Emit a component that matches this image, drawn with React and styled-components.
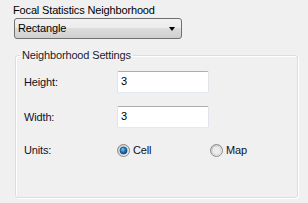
import React from 'react'
import styled, { createGlobalStyle } from 'styled-components'

const GlobalStyle = createGlobalStyle`
  html, body {
    margin: 0;
    padding: 0;
    background: #f0f0f0;
  }
  body {
    font-family: "Liberation Sans", Arial, sans-serif;
    font-size: 11px;
    letter-spacing: -0.15px;
    color: #000;
  }
`

const Page = styled.div`
  width: 308px;
  height: 203px;
  box-sizing: border-box;
  padding: 4px 0 0 14px;
  display: flex;
  flex-direction: column;
`

const Title = styled.div`
  margin-left: -1px;
  line-height: 13px;
`

const Combo = styled.div`
  margin-top: 1px;
  width: 168px;
  height: 21px;
  flex: none;
  box-sizing: border-box;
  border: 1px solid #707070;
  border-radius: 3px;
  background: linear-gradient(#f2f2f2 0%, #ebebeb 50%, #dddddd 50%, #cfcfcf 100%);
  display: flex;
  align-items: center;
  justify-content: space-between;
  padding: 0 4px 0 3px;
`

const ComboText = styled.span`
  line-height: 13px;
`

const Arrow = styled.span`
  width: 0;
  height: 0;
  border-left: 3.5px solid transparent;
  border-right: 3.5px solid transparent;
  border-top: 4px solid #000;
  margin-right: 2px;
`

const Group = styled.fieldset`
  margin: 10px 0 0 1px;
  width: 283px;
  height: 149px;
  flex: none;
  box-sizing: border-box;
  padding: 9px 8px 0 8px;
  border: 1px solid #d5dfe5;
  border-radius: 3px;
  box-shadow: inset 1px 1px 0 #fff, 1px 1px 0 #fff;
`

const Legend = styled.legend`
  margin-left: -4px;
  padding: 0 2px;
  line-height: 13px;
  color: #1a1a2e;
`

const Form = styled.div`
  display: grid;
  grid-template-columns: 93px auto;
  row-gap: 13px;
  align-items: center;
`

const Label = styled.span`
  line-height: 13px;
  color: #101025;
`

const TextBox = styled.input`
  width: 92px;
  height: 22px;
  box-sizing: border-box;
  margin: 0;
  border: 1px solid #e2e3ea;
  border-top-color: #abadb3;
  border-bottom-color: #e3e9ef;
  border-radius: 2px;
  background: #fff;
  padding: 0 3px 3px;
  font: inherit;
  color: #000;
  outline: none;
`

const UnitsRow = styled.div`
  grid-column: 1 / -1;
  display: grid;
  grid-template-columns: 93px 93px auto;
  align-items: center;
  height: 22px;
  margin-top: -2px;
`

const Option = styled.label`
  display: flex;
  align-items: center;
  gap: 3px;
  line-height: 13px;
  color: #101025;
`

const Radio = ({ checked }) => (
  <svg width="13" height="13" viewBox="0 0 13 13">
    <defs>
      <linearGradient id="rbg" x1="0" y1="0" x2="1" y2="1">
        <stop offset="0" stopColor="#c4c4c4" />
        <stop offset="1" stopColor="#f8f8f8" />
      </linearGradient>
      <radialGradient id="rdot" cx="0.4" cy="0.35" r="0.75">
        <stop offset="0" stopColor="#7cc8f4" />
        <stop offset="0.45" stopColor="#1f7fca" />
        <stop offset="1" stopColor="#0a3560" />
      </radialGradient>
    </defs>
    <circle cx="6.5" cy="6.5" r="6" fill="url(#rbg)" stroke="#8a8a8a" strokeWidth="1" />
    <circle cx="6.5" cy="6.5" r="4.3" fill="#ececec" stroke="#cfcfcf" strokeWidth="0.6" />
    {checked && <circle cx="6.5" cy="6.5" r="3.5" fill="url(#rdot)" stroke="#163f6a" strokeWidth="0.7" />}
  </svg>
)

export default function App() {
  return (
    <Page>
      <GlobalStyle />
      <Title>Focal Statistics Neighborhood</Title>
      <Combo>
        <ComboText>Rectangle</ComboText>
        <Arrow />
      </Combo>
      <Group>
        <Legend>Neighborhood Settings</Legend>
        <Form>
          <Label>Height:</Label>
          <TextBox defaultValue="3" />
          <Label>Width:</Label>
          <TextBox defaultValue="3" />
          <UnitsRow>
            <Label>Units:</Label>
            <Option>
              <Radio checked />
              Cell
            </Option>
            <Option>
              <Radio />
              Map
            </Option>
          </UnitsRow>
        </Form>
      </Group>
    </Page>
  )
}
